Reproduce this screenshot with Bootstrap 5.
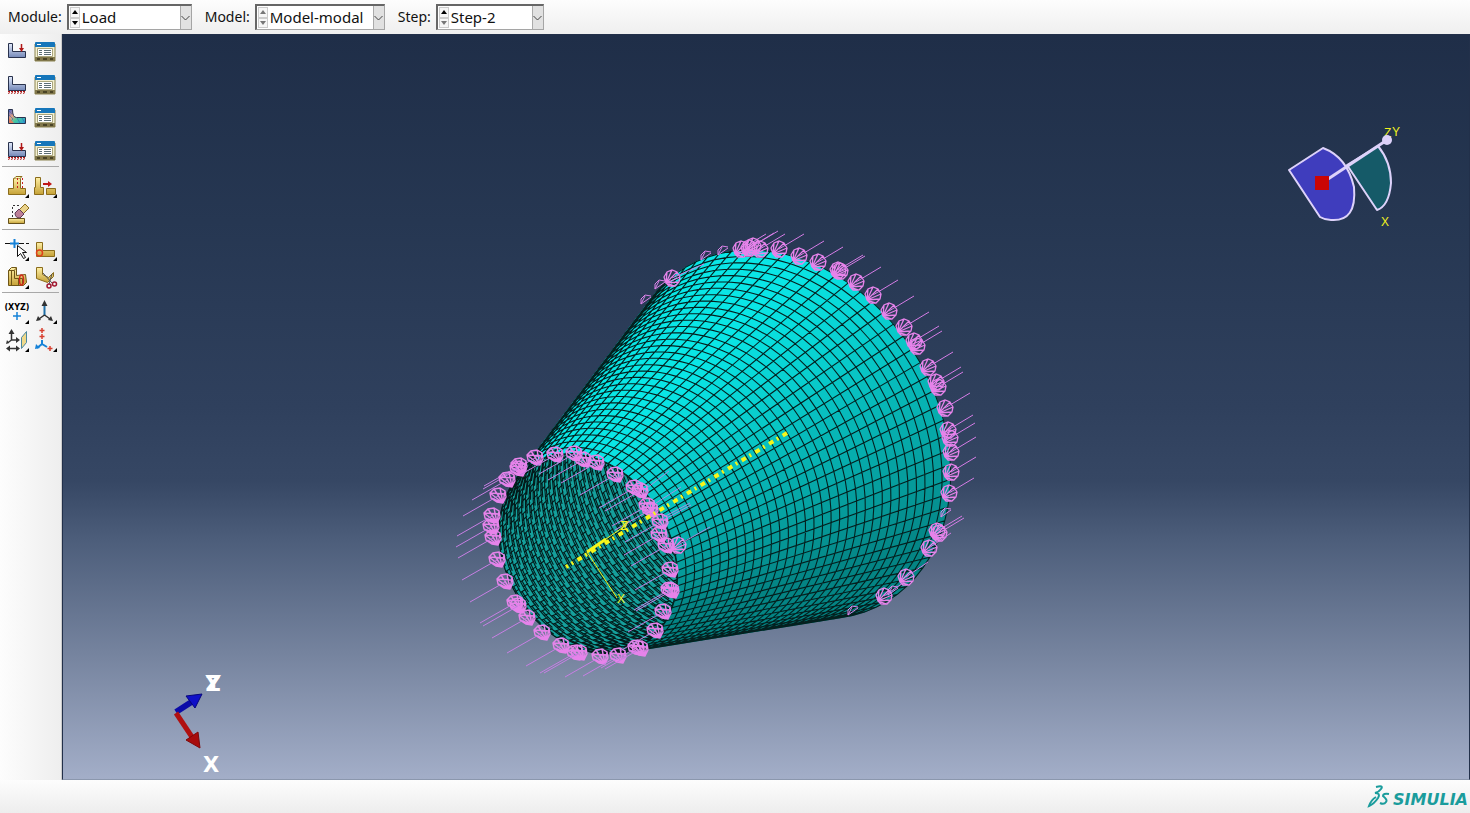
<!DOCTYPE html>
<html lang="en">
<head>
<meta charset="utf-8">
<meta name="viewport" content="width=device-width, initial-scale=1">
<title>Load module</title>
<link href="https://cdn.jsdelivr.net/npm/bootstrap@5.3.0/dist/css/bootstrap.min.css" rel="stylesheet">
<style>
  body { font-family: "Noto Sans", "Open Sans", sans-serif; font-size: 15px; line-height: 20px; color: #111; background: #f1f1f1; }
  .context-bar { height: 34px; padding: 4px 8px; background: linear-gradient(#fdfdfd, #efefef); gap: 13px; }
  .context-bar label { margin-right: 5px; font-size: 14px; }
  .combo { height: 26px; background: #fff; border: 1px solid #a5a5a5; border-top: 2px solid #666; border-left: 2px solid #666; }
  .combo select { appearance: none; border: 0; background: transparent; padding: 0 12px 0 2px; width: 100%; height: 22px; color: #111; outline: 0; line-height: 20px; }
  .spin { width: 10px; flex: none; margin: 1px 0 1px 1px; }
  .spin button { border: 1px solid #ccc; background: #f6f6f6; padding: 0; line-height: 0; color: #000; flex: 1; display: flex; align-items: center; justify-content: center; }
  .spin button:disabled { color: #777; }
  .drop { right: 0; top: 0; bottom: 0; width: 11px; background: #e1e1e1; border-left: 1px solid #aaa; pointer-events: none; }
  .combo-module { width: 125px; } .combo-model { width: 130px; } .combo-step { width: 108px; }
  .toolbox { width: 62px; flex: none; background: linear-gradient(90deg, #fdfdfd, #eeeeee); padding: 0 2px; border-right: 1px solid #ccc; }
  .tools { display: grid; grid-template-columns: 28px 28px; padding-left: 1px; }
  .tools button { border: 0; background: transparent; padding: 0; display: flex; align-items: center; justify-content: center; }
  .tools-a button { height: 33px; } .tools-b button { height: 28px; }
  .tools + .tools { border-top: 1px solid #a8a8a8; }
  .tools-b { padding-top: 5px; padding-bottom: 1px; }
  .tools svg { width: 26px; height: 26px; overflow: visible; }
  .viewport { background: linear-gradient(#1f2e48 0%, #263752 25%, #2f405d 50%, #364764 60%, #4d5e7b 68%, #75839e 83%, #a3aec8 100%); border: 1px solid #22304a; border-bottom-color: #8b97ad; overflow: hidden; min-height: 0; }
  .scene { width: 100%; height: 100%; display: block; }
  .footer-bar { height: 33px; background: linear-gradient(#fdfdfd, #ededed); padding: 4px 2px 0 0; color: #1a9c9c; }
  .brand-word { font: italic bold 16px/20px "DejaVu Sans", sans-serif; padding: 6px 0 0 2px; }
  .gizmo { font: 12px "Liberation Sans", sans-serif; fill: #f0f01e; }
  .triad { font: bold 21px "DejaVu Sans", sans-serif; fill: #fff; }
</style>
</head>
<body>
<svg class="position-absolute" width="0" height="0" aria-hidden="true">
  <defs>
    <linearGradient id="steel" x2="0" y2="1"><stop stop-color="#e3ebfb"/><stop offset="1" stop-color="#7488b8"/></linearGradient>
    <linearGradient id="gold" x2="0" y2="1"><stop stop-color="#fff0a6"/><stop offset="1" stop-color="#c5a136"/></linearGradient>
    <linearGradient id="rainbow" x2="1" y2="1"><stop stop-color="#3a5fd0"/><stop offset=".35" stop-color="#e4a080"/><stop offset=".6" stop-color="#42c8a0"/><stop offset="1" stop-color="#2b9cd8"/></linearGradient>
    <symbol id="ell" viewBox="0 0 26 26"><path d="M4.500 5.500h4v8h13v6H4.500z" fill="url(#steel)" stroke="#29324d"/></symbol>
    <symbol id="arrow" viewBox="0 0 26 26"><path d="M17.500 6v5" stroke="#b01818" stroke-width="1.500"/><path d="M15 10h5l-2.500 4z" fill="#b01818"/></symbol>
    <symbol id="fix" viewBox="0 0 26 26"><path d="M4 20.500h18" stroke="#b01818" stroke-dasharray="2 1"/><path d="M5.500 21l-1 2m4-2l-1 2m4-2l-1 2m4-2l-1 2m4-2l-1 2m4-2l-1 2" stroke="#b01818"/></symbol>
    <symbol id="manager" viewBox="0 0 26 26"><path d="M3 6h20v17H3z" fill="#f3efd0" stroke="#8b8450"/><path d="M3 5q0-1 1-1h18q1 0 1 1v4H3z" fill="#1676ba"/><path d="M5 6.500h4" stroke="#fff"/><path d="M5.500 10.500h15v8h-15z" fill="#fff" stroke="#aaa67d"/><path d="M7 12.500h3m2 0h7M7 14.500h3m2 0h7M7 16.500h3m2 0h7" stroke="#5c6e74"/><path d="M3 19h20v4H3z" fill="#81774a"/><path d="M5 21h3m3 0h4m3 0h3" stroke="#4a4426" stroke-width="2"/></symbol>
    <symbol id="more" viewBox="0 0 26 26"><path d="M25 21v4h-4z" fill="#000"/></symbol>
  </defs>
</svg>

<div class="d-flex flex-column vh-100">
  <form class="context-bar d-flex align-items-center">
    <div class="d-flex align-items-center">
      <label for="module">Module:</label>
      <div class="combo combo-module d-flex position-relative">
        <div class="spin d-flex flex-column"><button type="button" aria-label="Previous module"><svg width="6" height="4"><path d="M0 4L3 0l3 4z" fill="currentColor"/></svg></button><button type="button" aria-label="Next module"><svg width="6" height="4"><path d="M0 0h6L3 4z" fill="currentColor"/></svg></button></div>
        <select id="module"><option>Load</option></select>
        <span class="drop position-absolute d-flex align-items-center justify-content-center"><svg width="9" height="6" fill="none" stroke="#444"><path d="M.5 1l4 4 4-4"/></svg></span>
      </div>
    </div>
    <div class="d-flex align-items-center">
      <label for="model">Model:</label>
      <div class="combo combo-model d-flex position-relative">
        <div class="spin d-flex flex-column"><button type="button" disabled aria-label="Previous model"><svg width="6" height="4"><path d="M0 4L3 0l3 4z" fill="currentColor"/></svg></button><button type="button" disabled aria-label="Next model"><svg width="6" height="4"><path d="M0 0h6L3 4z" fill="currentColor"/></svg></button></div>
        <select id="model"><option>Model-modal</option></select>
        <span class="drop position-absolute d-flex align-items-center justify-content-center"><svg width="9" height="6" fill="none" stroke="#444"><path d="M.5 1l4 4 4-4"/></svg></span>
      </div>
    </div>
    <div class="d-flex align-items-center">
      <label for="step">Step:</label>
      <div class="combo combo-step d-flex position-relative">
        <div class="spin d-flex flex-column"><button type="button" aria-label="Previous step"><svg width="6" height="4"><path d="M0 4L3 0l3 4z" fill="currentColor"/></svg></button><button type="button" disabled aria-label="Next step"><svg width="6" height="4"><path d="M0 0h6L3 4z" fill="currentColor"/></svg></button></div>
        <select id="step"><option>Step-2</option></select>
        <span class="drop position-absolute d-flex align-items-center justify-content-center"><svg width="9" height="6" fill="none" stroke="#444"><path d="M.5 1l4 4 4-4"/></svg></span>
      </div>
    </div>
  </form>

  <div class="d-flex flex-grow-1" style="min-height:0">
    <nav class="toolbox" aria-label="Load tools">
      <div class="tools tools-a">
        <button aria-label="Create load"><svg viewBox="0 0 26 26"><use href="#ell"/><use href="#arrow"/></svg></button>
        <button aria-label="Load manager"><svg viewBox="0 0 26 26"><use href="#manager"/></svg></button>
        <button aria-label="Create boundary condition"><svg viewBox="0 0 26 26"><use href="#ell"/><use href="#fix"/></svg></button>
        <button aria-label="Boundary condition manager"><svg viewBox="0 0 26 26"><use href="#manager"/></svg></button>
        <button aria-label="Create predefined field"><svg viewBox="0 0 26 26"><path d="M4.500 5.500h4q0 8 4 8h9v6H4.500z" fill="url(#rainbow)" stroke="#29324d"/><path d="M5 7l3 3M5 11l4 4-4 4M13 14l3 5M18 14l3 5" stroke="#3250b0" stroke-opacity=".5" fill="none"/><path d="M5 14l5 5H5z" fill="#e08060"/></svg></button>
        <button aria-label="Predefined field manager"><svg viewBox="0 0 26 26"><use href="#manager"/></svg></button>
        <button aria-label="Create load case"><svg viewBox="0 0 26 26"><use href="#ell"/><use href="#arrow"/><use href="#fix"/></svg></button>
        <button aria-label="Load case manager"><svg viewBox="0 0 26 26"><use href="#manager"/></svg></button>
      </div>
      <div class="tools tools-b">
        <button aria-label="Partition"><svg viewBox="0 0 26 26"><path d="M4.500 15.500h5v-10h7v10h5v6h-17z" fill="url(#gold)" stroke="#8a6c1c"/><path d="M10 5.500l2-2h6l-2 2" fill="#fff5b8" stroke="#8a6c1c"/><path d="M13.500 5v11M18.500 5v10" stroke="#c82020" stroke-dasharray="2 2"/><use href="#more"/></svg></button>
        <button aria-label="Separate"><svg viewBox="0 0 26 26"><path d="M3.500 4.500h5v10h3v7h-9v-7h1zM14.500 15.500h9v6h-9z" fill="url(#gold)" stroke="#8a6c1c"/><path d="M11 11h6" stroke="#c01818" stroke-width="2"/><path d="M16 8l4 3-4 3z" fill="#c01818"/><use href="#more"/></svg></button>
        <button aria-label="Erase feature"><svg viewBox="0 0 26 26"><path d="M4.500 17.500h16v5h-16z" fill="url(#gold)" stroke="#65501a"/><path d="M8.500 16V4.500h7" fill="none" stroke="#333" stroke-dasharray="2 2"/><path d="M15 9l6-6 4 4-6 6z" fill="#ead28a" stroke="#8a6c1c"/><path d="M11 12l4-4 5 5-4 4q-5 0-5-5z" fill="#bd8098" stroke="#5d3a55"/></svg></button>
      </div>
      <div class="tools tools-b">
        <button aria-label="Datum select"><svg viewBox="0 0 26 26"><path d="M1 7.500h24" stroke="#111" stroke-dasharray="5 2"/><path d="M10.500 3v9M6 7.500h9" stroke="#1682d8" stroke-width="2"/><path d="M13.500 9.500v11l3-3 3 5 2-1-3-5h4z" fill="#fff" stroke="#111"/><use href="#more"/></svg></button>
        <button aria-label="Virtual topology"><svg viewBox="0 0 26 26"><path d="M4.500 6.500h6v8h12v6h-18z" fill="url(#gold)" stroke="#8a6c1c"/><circle cx="7.500" cy="17" r="3" fill="none" stroke="#e0401c" stroke-width="1.500"/><use href="#more"/></svg></button>
        <button aria-label="Geometry repair"><svg viewBox="0 0 26 26"><path d="M4.500 6.500l3-3h5v8l9-1 1 8-3 3h-15z" fill="url(#gold)" stroke="#6e5617"/><path d="M4.500 6.500h6v8h8v7M10.500 6l2-2M7.500 7v14M14.500 15v6" fill="none" stroke="#6e5617"/><ellipse cx="17.500" cy="16" rx="2" ry="5" fill="none" stroke="#d02a1c" stroke-width="1.500"/><use href="#more"/></svg></button>
        <button aria-label="Cut geometry"><svg viewBox="0 0 26 26"><path d="M4.500 3.500h6v7l6 3 5-5v4l-6 6-11-4z" fill="url(#gold)" stroke="#8a6c1c"/><path d="M11 9l9 10M20 10l-3 10" stroke="#555"/><circle cx="17" cy="22" r="2" fill="none" stroke="#a01830" stroke-width="1.500"/><circle cx="22.500" cy="20" r="2" fill="none" stroke="#a01830" stroke-width="1.500"/></svg></button>
      </div>
      <div class="tools tools-b">
        <button aria-label="Create datum point"><svg viewBox="0 0 26 26"><text x="13" y="11" text-anchor="middle" font-family="DejaVu Sans" font-weight="bold" font-size="8">(XYZ)</text><path d="M13 13v8M9 17h8" stroke="#1682d8" stroke-width="1.500"/><use href="#more"/></svg></button>
        <button aria-label="Create coordinate system"><svg viewBox="0 0 26 26"><path d="M12.500 4v13" stroke="#2070a8" stroke-width="2"/><path d="M12.500 16l-7 5M12.500 16l7 5" stroke="#333" stroke-width="1.500"/><path d="M12.500 1l3 6h-6zM4 22l2-5 3 4zM21 22l-5-1 3-4z" fill="#333"/><use href="#more"/></svg></button>
        <button aria-label="Create datum plane"><svg viewBox="0 0 26 26"><path d="M7.500 6v7h6M7.500 13l-4 3M5 21.500h9" stroke="#333" fill="none" stroke-width="1.500"/><path d="M7.500 2l3 5h-6zM12 10l4 3-4 3zM2 17l1-4 2 3zM2 21.500l4-3v6zM16 21.500l-4-3v6z" fill="#333"/><path d="M17.500 10.500l5-6v11l-5 6z" fill="#efd98a" stroke="#4c87a0"/><use href="#more"/></svg></button>
        <button aria-label="Create datum from points"><svg viewBox="0 0 26 26"><path d="M10 1v5M7.500 3.500h5M10 7v5M7.500 9.500h5M18 19v5M15.500 21.500h5" stroke="#d84030" stroke-width="1.500"/><path d="M10 13v4l-5 4M10 17l5 3" stroke="#1682d8" fill="none" stroke-width="2"/><path d="M3 22l1-5 4 4z" fill="#1682d8"/><use href="#more"/></svg></button>
      </div>
    </nav>

    <main class="viewport flex-grow-1">
      <svg class="scene" viewBox="63 35 1406 744" role="img" aria-label="Meshed cone with boundary conditions">
        <defs>
          <clipPath id="mouth"><path id="mouthPath"/></clipPath>
          <g id="farMark" fill="none" stroke="#e683ea" stroke-width="1.300"><path d="M-6 5L-8-1-5-6 0-8 5-6 8-1 7 4 3 8-3 8zM-6 5L-5-6M-6 5L0-8M-6 5L5-6M-6 5L8-1M-6 5L7 4M-6 5L3 8"/></g>
          <g id="nearMark" fill="none" stroke="#e683ea" stroke-width="1.400"><path d="M5 7L-1 6-7 2-8-3-4-7 2-8 7-5 8 1zM5 7L-7 2M5 7L-8-3M5 7L-4-7M5 7L2-8M5 7L7-5M-8-3L8-2"/></g>
        </defs>
        <g id="shell"></g>
        <g id="inside" clip-path="url(#mouth)"></g>
        <g id="marks"></g>
        <path d="M787 433L566 567" stroke="#f6f61a" stroke-width="4" stroke-dasharray="5 5 2 4" fill="none"/>
        <path d="M625 526L587 552L617 598" stroke="#f6f61a" fill="none"/><path d="M606 539L587 552" stroke="#f6f61a" stroke-width="3"/>
        <g class="gizmo" text-anchor="middle"><text x="624" y="530">Z</text><text x="625" y="530">Y</text><text x="621" y="603">X</text></g>

        <g stroke="#ddd2fa" stroke-width="2" stroke-linejoin="round">
          <path d="M1289 170L1323 148Q1347 157 1354 187Q1357 222 1331 220Q1325 220 1320 217z" fill="#3f3dbd"/>
          <path d="M1347 165L1378 146Q1391 162 1391 183Q1389 206 1377 210z" fill="#155a68"/>
          <path d="M1322 183L1387 140" stroke-width="3"/>
        </g>
        <path d="M1315 176h14v14h-14z" fill="#cb0505"/>
        <g class="gizmo"><text x="1384" y="137">Z</text><circle cx="1387" cy="140" r="5" fill="#ddd2fa"/><text x="1392" y="136">Y</text><text x="1381" y="226">X</text></g>

        <path d="M176 712L193 701" stroke="#0b0ba8" stroke-width="6"/><path d="M186 696L202 694L195 708z" fill="#1010c8" stroke="#06067c"/>
        <path d="M176 713L192 737" stroke="#b01010" stroke-width="5"/><path d="M186 740L198 732L200 748z" fill="#a80c0c" stroke="#7e0808"/>
        <g class="triad" text-anchor="middle"><text x="213" y="691">Z</text><text x="213" y="691">Y</text><text x="211" y="772">X</text></g>
      </svg>
    </main>
  </div>

  <footer class="footer-bar d-flex justify-content-end align-items-start">
    <svg width="24" height="24" viewBox="0 0 24 24" fill="none" stroke="#1a9c9c" stroke-width="2" aria-hidden="true"><path d="M9 3Q17 1 14 5Q12 8 8 9Q14 9 11 14Q7 20 2 22Q4 16 9 13M22 10Q16 9 16 12Q21 16 19 18Q17 21 13 19"/></svg>
    <span class="brand-word">SIMULIA</span>
  </footer>
</div>
<script src="https://cdn.jsdelivr.net/npm/bootstrap@5.3.0/dist/js/bootstrap.bundle.min.js"></script>
<script>
  // Cone frustum: two rings seen obliquely, joined by straight generators.
  const near = {x: 588, y: 554, r: 106}, far = {x: 786, y: 434.5, r: 195};
  const squash = 0.78, RINGS = 32, SEG = 78;
  const ax = 0.856, ay = -0.517;           // screen direction of the axis
  const pt = (i, j, twist = 0) => {
    const t = i / RINGS, a = (j + twist) * 2 * Math.PI / SEG;
    const r = near.r + (far.r - near.r) * t;
    const u = r * Math.cos(a), v = r * squash * Math.sin(a);
    return [near.x + (far.x - near.x) * t - u * ay + v * ax, near.y + (far.y - near.y) * t + u * ax + v * ay];
  };
  const facing = j => {
    const p = pt(0, j), q = pt(0, j + 1), s = pt(RINGS, j);
    return (q[0] - p[0]) * (s[1] - p[1]) - (q[1] - p[1]) * (s[0] - p[0]);
  };
  const str = pts => pts.map(p => p[0].toFixed(1) + ' ' + p[1].toFixed(1)).join('L');
  const add = (id, d, fill, stroke, w) => {
    const e = document.createElementNS('http://www.w3.org/2000/svg', 'path');
    e.setAttribute('d', d); e.setAttribute('fill', fill); e.setAttribute('stroke', stroke);
    e.setAttribute('stroke-width', w || 1);
    document.getElementById(id).appendChild(e);
  };
  const sign = Math.sign(facing(SEG / 4));
  let outer = '', inner = '';
  for (let j = 0; j < SEG; j++) {
    if (facing(j) * sign <= 0) continue;
    const strip = 'M' + str([pt(0, j), pt(RINGS, j), pt(RINGS, j + 1), pt(0, j + 1)]) + 'z';
    const a = (j + .5) * 2 * Math.PI / SEG;
    const l = Math.max(0, Math.min(1, .46 - .62 * Math.cos(a + .25)));
    const c = `rgb(${Math.round(4 + 6 * l)},${Math.round(132 + 98 * l)},${Math.round(132 + 98 * l)})`;
    add('shell', strip, c, c);
    outer += 'M' + str([pt(0, j), pt(RINGS, j)]);
    for (let i = 0; i <= RINGS; i++) outer += 'M' + str([pt(i, j), pt(i, j + 1)]);
  }
  add('shell', outer, 'none', '#04201f', 1.1);
  const mouth = 'M' + str(Array.from({length: SEG}, (_, j) => pt(0, j))) + 'z';
  document.getElementById('mouthPath').setAttribute('d', mouth);
  add('inside', mouth, '#15a09c', 'none');
  for (let j = 0; j < SEG; j++) {
    if (facing(j) * sign > 0) continue;
    for (let i = 0; i < RINGS; i++) {
      const k = (i + j) % 2 ? .28 : -.12;
      inner += 'M' + str([pt(i, j), pt(i, j + 1)]);
      inner += 'M' + str([pt(i + .35, j, k), pt(i + .35, j + .8, k)]);
      inner += 'M' + str([pt(i, j, k), pt(i + 1.2, j, k)]);
    }
  }
  add('inside', inner, 'none', '#031b1b', 1.1);
  add('inside', mouth, 'none', '#031b1b', 2);

  // Boundary-condition symbols, each with its direction line.
  const farPts = [[672,278],[741,249],[749,248],[753,246],[760,249],[779,249],[799,256],[818,262],[838,270],[840,271],[856,282],[873,295],[889,311],[904,327],[914,341],[917,346],[928,367],[936,382],[938,387],[945,408],[948,430],[950,438],[951,452],[951,472],[949,493],[937,531],[939,533],[929,548],[906,577],[884,596]];
  const nearPts = [[535,458],[519,466],[518,469],[507,480],[498,496],[492,516],[491,527],[493,538],[497,560],[505,582],[515,603],[518,606],[527,618],[542,633],[561,646],[575,653],[579,653],[600,657],[618,656],[636,648],[640,649],[655,631],[663,612],[669,590],[671,591],[670,570],[555,455],[574,454],[583,460],[596,463],[615,475],[634,488],[640,491],[647,506],[650,510],[660,522],[659,535],[666,546]];
  const marks = document.getElementById('marks');
  const half = [[646,300],[660,285],[706,256],[723,251],[853,611],[893,591],[946,513]];
  marks.innerHTML =
    half.map(([x, y]) => `<path d="M${x-5} ${y+4}l0-5 4-4 6 1M${x-5} ${y+4}l4-8M${x-5} ${y+4}l10-7" fill="none" stroke="#d983e8"/>`).join('') +
    farPts.map(([x, y]) => `<use href="#farMark" x="${x}" y="${y}"/><path d="M${x} ${y}l${x < 700 ? 32 : x < 930 && y > 540 ? 22 : 25} ${x < 700 ? -14 : -15}" stroke="#d47ce5"/>`).join('') +
    nearPts.map(([x, y]) => `<use href="#nearMark" x="${x}" y="${y}"/><path d="M${x} ${y}l-35 20" stroke="#c77fe4"/>`).join('') +
    '<use href="#farMark" x="678" y="545"/><path d="M647 488l22-17M656 503l25-16M660 519l30-16M661 521l30-16M678 545l32-18" stroke="#a68ce2"/>';
</script>
</body>
</html>
